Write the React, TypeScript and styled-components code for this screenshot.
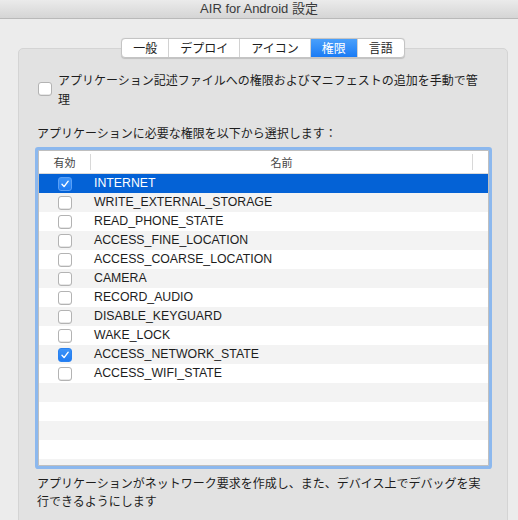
import React from 'react'
import styled, { createGlobalStyle } from 'styled-components'

const GlobalStyle = createGlobalStyle`
  html, body {
    margin: 0;
    padding: 0;
    background: #ececec;
    overflow: hidden;
  }
  body {
    font-family: "Liberation Sans", "Noto Sans CJK JP", sans-serif;
    color: #1d1d1d;
  }
`

const Window = styled.div`
  width: 518px;
  height: 520px;
  background: #ececec;
  overflow: hidden;
`

const TitleBar = styled.div`
  height: 18px;
  line-height: 18px;
  border-bottom: 1px solid #b9b9b9;
  background: linear-gradient(#ebebeb, #d5d5d5);
  text-align: center;
  font-size: 13px;
  color: #3a3a3a;
`

const Panel = styled.div`
  margin: 29px 10px 0 18px;
  min-height: 520px;
  padding: 0 18px;
  border: 1px solid #d4d4d4;
  border-radius: 5px;
  background: #e2e2e2;
`

const TabBar = styled.div`
  display: flex;
  justify-content: center;
  margin-top: -11px;
  position: relative;
`

const TabGroup = styled.div`
  display: flex;
  border: 1px solid #c4c4c4;
  border-radius: 4px;
  background: #fff;
  box-shadow: 0 0.5px 1px rgba(0, 0, 0, 0.15);
  overflow: hidden;
`

const Tab = styled.div<{ $active?: boolean; $first?: boolean }>`
  height: 18px;
  line-height: 18px;
  padding: 0 11px;
  font-size: 12px;
  font-family: "Noto Sans CJK JP", sans-serif;
  border-left: ${(p) => (p.$first ? 'none' : '1px solid #d2d2d2')};
  color: ${(p) => (p.$active ? '#fff' : '#1d1d1d')};
  background: ${(p) =>
    p.$active ? 'linear-gradient(#4aa0fb, #1a7bf5)' : 'transparent'};
`

const ManualRow = styled.div`
  display: flex;
  align-items: flex-start;
  margin-top: 14px;
`

const Box = styled.span<{ $checked?: boolean; $onBlue?: boolean }>`
  flex: none;
  width: 14px;
  height: 14px;
  box-sizing: border-box;
  border-radius: 3px;
  display: flex;
  align-items: center;
  justify-content: center;
  border: 1px solid
    ${(p) => (p.$checked ? (p.$onBlue ? '#5aa0f6' : '#2a82f0') : '#b3b3b3')};
  background: ${(p) =>
    p.$checked ? 'linear-gradient(#3c93f8, #1f7cf3)' : '#fff'};
  box-shadow: ${(p) => (p.$checked ? 'none' : 'inset 0 -0.5px 0 #d0d0d0')};
`

const ManualBox = styled(Box)`
  margin: 10px 0 0 1px;
`

const ManualText = styled.div`
  margin-left: 6px;
  max-width: 425px;
  font-size: 12px;
  line-height: 19px;
`

const Label = styled.div`
  margin-top: 15px;
  font-size: 12px;
  line-height: 19px;
`

const TableFrame = styled.div`
  margin: 6px 0 0 1px;
  width: 451px;
  height: 316px;
  box-sizing: border-box;
  border: 1px solid #bfbfbf;
  border-radius: 1px;
  box-shadow: 0 0 0 3px #8cb8ee;
  background: #fff;
  overflow: hidden;
  display: flex;
  flex-direction: column;
`

const Header = styled.div`
  flex: none;
  height: 22px;
  border-bottom: 1px solid #dadada;
  display: flex;
  align-items: center;
  font-size: 11px;
  font-family: "Noto Sans CJK JP", sans-serif;
  color: #444;
`

const HeadCell = styled.div<{ $w?: number }>`
  ${(p) => (p.$w ? `width: ${p.$w}px; flex: none;` : 'flex: 1;')}
  text-align: center;
  line-height: 22px;
`

const HeadSep = styled.div`
  flex: none;
  width: 1px;
  height: 16px;
  background: #d8d8d8;
`

const Row = styled.div<{ $odd: boolean; $selected?: boolean }>`
  flex: none;
  height: 19px;
  display: flex;
  align-items: center;
  font-size: 12.3px;
  background: ${(p) =>
    p.$selected ? '#0462d6' : p.$odd ? '#f3f3f3' : '#fff'};
  color: ${(p) => (p.$selected ? '#fff' : '#1d1d1d')};
`

const CheckCell = styled.div`
  flex: none;
  width: 52px;
  display: flex;
  justify-content: center;
`

const NameCell = styled.div`
  padding-left: 3px;
  line-height: 19px;
`

const Description = styled.div`
  margin-top: 9px;
  width: 450px;
  font-size: 12px;
  line-height: 18px;
`

function Check() {
  return (
    <svg width="10" height="10" viewBox="0 0 10 10">
      <path
        d="M2 5.3 L4.1 7.6 L8.2 2.2"
        fill="none"
        stroke="#fff"
        strokeWidth="1.4"
        strokeLinecap="round"
        strokeLinejoin="round"
      />
    </svg>
  )
}

const TABS = ['一般', 'デプロイ', 'アイコン', '権限', '言語']

const PERMISSIONS = [
  { name: 'INTERNET', checked: true },
  { name: 'WRITE_EXTERNAL_STORAGE', checked: false },
  { name: 'READ_PHONE_STATE', checked: false },
  { name: 'ACCESS_FINE_LOCATION', checked: false },
  { name: 'ACCESS_COARSE_LOCATION', checked: false },
  { name: 'CAMERA', checked: false },
  { name: 'RECORD_AUDIO', checked: false },
  { name: 'DISABLE_KEYGUARD', checked: false },
  { name: 'WAKE_LOCK', checked: false },
  { name: 'ACCESS_NETWORK_STATE', checked: true },
  { name: 'ACCESS_WIFI_STATE', checked: false },
]

export default function App() {
  const selected = 0
  const filler = Array.from({ length: 16 - PERMISSIONS.length })

  return (
    <Window>
      <GlobalStyle />
      <TitleBar>AIR for Android 設定</TitleBar>
      <Panel>
        <TabBar>
          <TabGroup>
            {TABS.map((t, i) => (
              <Tab key={t} $first={i === 0} $active={t === '権限'}>
                {t}
              </Tab>
            ))}
          </TabGroup>
        </TabBar>

        <ManualRow>
          <ManualBox />
          <ManualText>
            アプリケーション記述ファイルへの権限およびマニフェストの追加を手動で管理
          </ManualText>
        </ManualRow>

        <Label>アプリケーションに必要な権限を以下から選択します：</Label>

        <TableFrame>
          <Header>
            <HeadCell $w={51}>有効</HeadCell>
            <HeadSep />
            <HeadCell>名前</HeadCell>
            <HeadSep />
            <HeadCell $w={15} />
          </Header>
          {PERMISSIONS.map((p, i) => (
            <Row key={p.name} $odd={i % 2 === 1} $selected={i === selected}>
              <CheckCell>
                <Box $checked={p.checked} $onBlue={i === selected}>
                  {p.checked && <Check />}
                </Box>
              </CheckCell>
              <NameCell>{p.name}</NameCell>
            </Row>
          ))}
          {filler.map((_, k) => (
            <Row key={k} $odd={(PERMISSIONS.length + k) % 2 === 1} />
          ))}
        </TableFrame>

        <Description>
          アプリケーションがネットワーク要求を作成し、また、デバイス上でデバッグを実行できるようにします
        </Description>
      </Panel>
    </Window>
  )
}
